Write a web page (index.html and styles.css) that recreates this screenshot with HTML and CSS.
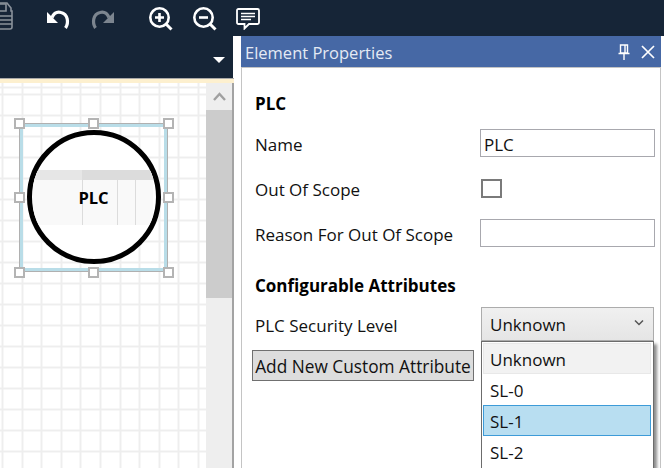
FILE: index.html
```html
<!DOCTYPE html>
<html>
<head>
    <title>Element Properties</title>
    <link rel="stylesheet" href="styles.css">
</head>
<body>
    <div class="toolbar">
        <svg class="tool-save" width="14" height="32" viewBox="0 0 14 32">
            <path d="M-6 3H7L11 8V11H12V27Q12 29 10 29H-6Z" fill="none" stroke="#8a929b" stroke-width="1.600"/>
            <path d="M-4 4H6V11H-4ZM-4 16H12M-4 20H12M-4 24H12" fill="none" stroke="#8a929b" stroke-width="1.600"/>
        </svg>
        <svg class="tool-undo" width="26" height="26" viewBox="0 0 26 26">
            <path d="M20.500 24C24 19 23 10 16 8.500C12 7.500 9 9 7 13.500" fill="none" stroke="#fff" stroke-width="3.200"/>
            <path d="M2 8V19H13Z" fill="#fff"/>
        </svg>
        <svg class="tool-redo" width="26" height="26" viewBox="0 0 26 26">
            <path d="M5.500 24C2 19 3 10 10 8.500C14 7.500 17 9 19 13.500" fill="none" stroke="#7c858f" stroke-width="3.200"/>
            <path d="M24 8V19H13Z" fill="#7c858f"/>
        </svg>
        <svg class="tool-zoom-in" width="26" height="26" viewBox="0 0 26 26">
            <circle cx="11.500" cy="12.500" r="9.200" fill="none" stroke="#fff" stroke-width="2.600"/>
            <path d="M18 19L23.500 24.500" stroke="#fff" stroke-width="3"/>
            <path d="M11.500 8V17M7 12.500H16" stroke="#fff" stroke-width="2.600"/>
        </svg>
        <svg class="tool-zoom-out" width="26" height="26" viewBox="0 0 26 26">
            <circle cx="11.500" cy="12.500" r="9.200" fill="none" stroke="#fff" stroke-width="2.600"/>
            <path d="M18 19L23.500 24.500" stroke="#fff" stroke-width="3"/>
            <path d="M7 12.500H16" stroke="#fff" stroke-width="2.600"/>
        </svg>
        <svg class="tool-comment" width="24" height="22" viewBox="0 0 24 22">
            <path d="M2.500 1H21.500Q23 1 23 2.500V14.500Q23 16 21.500 16H13L8.500 20.500V16H2.500Q1 16 1 14.500V2.500Q1 1 2.500 1Z" fill="none" stroke="#fff" stroke-width="1.800"/>
            <path d="M5 5.500H19M5 8.500H19M5 11.500H15" stroke="#fff" stroke-width="1.500"/>
        </svg>
    </div>

    <div class="main">
        <div class="designer">
            <div class="ribbon"><span class="ribbon-arrow"></span></div>
            <div class="ribbon-edge"></div>
            <div class="canvas-area">
                <div class="canvas">
                    <div class="shape">
                        <div class="shape-frame"></div>
                        <div class="shape-circle">
                            <div class="shape-fill">
                                <div class="fill-head"></div>
                                <div class="fill-rule rule-a"></div>
                                <div class="fill-rule rule-b"></div>
                                <div class="fill-rule rule-c"></div>
                            </div>
                        </div>
                        <div class="shape-label">PLC</div>
                        <span class="handle h-tl"></span>
                        <span class="handle h-tm"></span>
                        <span class="handle h-tr"></span>
                        <span class="handle h-ml"></span>
                        <span class="handle h-mr"></span>
                        <span class="handle h-bl"></span>
                        <span class="handle h-bm"></span>
                        <span class="handle h-br"></span>
                    </div>
                </div>
                <div class="scrollbar">
                    <div class="scroll-up">
                        <svg width="13" height="9" viewBox="0 0 13 9"><path d="M1 8L6.500 2L12 8" fill="none" stroke="#a0a0a0" stroke-width="2.400"/></svg>
                    </div>
                    <div class="scroll-thumb"></div>
                </div>
            </div>
        </div>

        <div class="panel">
            <div class="panel-title">
                <span class="panel-name">Element Properties</span>
                <svg class="pin" width="12" height="16" viewBox="0 0 12 16">
                    <path d="M2.500 1H9.500V9H2.500ZM7 1V9M0.500 9.500H11.500M6 10V16" fill="none" stroke="#fff" stroke-width="1.400"/>
                </svg>
                <svg class="close" width="14" height="14" viewBox="0 0 14 14">
                    <path d="M1 1L13 13M13 1L1 13" stroke="#fff" stroke-width="1.700"/>
                </svg>
            </div>
            <div class="panel-body">
                <div class="heading first">PLC</div>
                <div class="row name-row">
                    <span class="row-label">Name</span>
                    <span class="text-field">PLC</span>
                </div>
                <div class="row scope-row">
                    <span class="row-label">Out Of Scope</span>
                    <span class="checkbox"></span>
                </div>
                <div class="row reason-row">
                    <span class="row-label">Reason For Out Of Scope</span>
                    <span class="text-field"></span>
                </div>
                <div class="heading second">Configurable Attributes</div>
                <div class="row level-row">
                    <span class="row-label">PLC Security Level</span>
                    <span class="combo">
                        Unknown
                        <svg class="combo-arrow" width="10" height="7" viewBox="0 0 10 7"><path d="M1 1.500L5 5.500L9 1.500" fill="none" stroke="#555" stroke-width="1.500"/></svg>
                    </span>
                </div>
                <button class="add-button">Add New Custom Attribute</button>

                <ul class="dropdown">
                    <li class="option current">Unknown</li>
                    <li class="option">SL-0</li>
                    <li class="option selected">SL-1</li>
                    <li class="option">SL-2</li>
                </ul>
            </div>
        </div>
    </div>
</body>
</html>
```

FILE: styles.css
```css
/* Global styles */
html, body {
    margin: 0;
    padding: 0;
    height: 100%;
}

body {
    width: 664px;
    height: 468px;
    overflow: hidden;
    background-color: #fff;
    font-family: 'Open Sans', 'Noto Sans', sans-serif;
    font-size: 17px;
    color: #111;
    display: flex;
    flex-direction: column;
}

/* Top toolbar */
.toolbar {
    height: 36px;
    background-color: #162537;
    display: flex;
    align-items: flex-start;
    flex-shrink: 0;
}

.toolbar svg {
    display: block;
    flex-shrink: 0;
}

.tool-undo {
    margin: 4px 0 0 31px;
}

.tool-redo {
    margin: 4px 0 0 19px;
}

.tool-zoom-in {
    margin: 5px 0 0 32px;
}

.tool-zoom-out {
    margin: 5px 0 0 18px;
}

.tool-comment {
    margin: 8px 0 0 18px;
}

/* Main area */
.main {
    flex: 1;
    display: flex;
    min-height: 0;
}

.designer {
    width: 234px;
    display: flex;
    flex-direction: column;
}

.ribbon {
    height: 42px;
    margin-right: 1px;
    background-color: #162537;
    position: relative;
}

.ribbon-arrow {
    position: absolute;
    left: 213px;
    top: 21px;
    border-left: 6px solid transparent;
    border-right: 6px solid transparent;
    border-top: 6px solid #fff;
}

.ribbon-edge {
    height: 4px;
    background-color: #fdf0cf;
    border-top: 1px solid #a9a9a9;
}

.canvas-area {
    flex: 1;
    display: flex;
    min-height: 0;
    border-right: 2px solid #a3a3a3;
}

/* Canvas grid */
.canvas {
    width: 206px;
    position: relative;
    background-color: #fff;
    background-image:
        repeating-linear-gradient(to right, #eeeeee 0, #eeeeee 2px, transparent 2px, transparent 19.6px),
        repeating-linear-gradient(to bottom, #eeeeee 0, #eeeeee 2px, transparent 2px, transparent 21px);
    background-position: 1.500px 0, 0 10.500px;
}

.scrollbar {
    width: 26px;
    background-color: #eeeeee;
}

.scroll-up {
    height: 27px;
    display: flex;
    justify-content: center;
    align-items: center;
}

.scroll-thumb {
    height: 188px;
    background-color: #cccccc;
}

/* Selected shape */
.shape {
    position: absolute;
    left: 19px;
    top: 40px;
    width: 149px;
    height: 149px;
}

.shape-frame {
    position: absolute;
    inset: 0;
    border: 1px solid #b0b0b0;
    box-shadow: inset 0 0 0 3px #b9dde8;
}

.shape-circle {
    position: absolute;
    left: 8px;
    top: 7px;
    width: 134px;
    height: 134px;
    box-sizing: border-box;
    border: 5px solid #000;
    border-radius: 50%;
    background-color: #fff;
    overflow: hidden;
}

.shape-fill {
    position: absolute;
    left: 1px;
    top: 35px;
    width: 120px;
    height: 55px;
    background-color: #f9f9f9;
}

.fill-head {
    height: 10px;
    background: linear-gradient(to right, #e6e6e6 49px, #dcdcdc 49px);
}

.fill-rule {
    position: absolute;
    top: 0;
    width: 1px;
    height: 55px;
    background-color: #dcdcdc;
}

.rule-a {
    left: 49px;
}

.rule-b {
    left: 84px;
}

.rule-c {
    left: 102px;
}

.shape-label {
    position: absolute;
    left: 0;
    right: 0;
    top: 64px;
    text-align: center;
    font-size: 16.500px;
    font-weight: 700;
    line-height: 22px;
    color: #000;
}

.handle {
    position: absolute;
    width: 7px;
    height: 7px;
    background-color: #fff;
    border: 2px solid #b4b4b4;
}

.h-tl { left: -5px; top: -5px; }
.h-tm { left: 69px; top: -5px; }
.h-tr { left: 144px; top: -5px; }
.h-ml { left: -5px; top: 69px; }
.h-mr { left: 144px; top: 69px; }
.h-bl { left: -5px; top: 144px; }
.h-bm { left: 69px; top: 144px; }
.h-br { left: 144px; top: 144px; }

/* Properties panel */
.panel {
    width: 420px;
    margin-left: 7px;
    display: flex;
    flex-direction: column;
}

.panel-title {
    height: 31px;
    background-color: #4668a5;
    color: #e4eaf4;
    display: flex;
    align-items: center;
    padding: 0 6px 0 4px;
    flex-shrink: 0;
}

.panel-name {
    flex: 1;
    font-size: 16.500px;
    padding-top: 2px;
}

.close {
    margin-left: 11px;
}

.panel-body {
    flex: 1;
    position: relative;
    padding: 0 5px 0 13px;
    border: 1px solid #c4c4c4;
    border-bottom: 0;
}

.heading {
    font-weight: 700;
    color: #000;
    line-height: 24px;
}

.heading.first {
    margin-top: 24px;
}

.heading.second {
    margin-top: 27px;
}

.row {
    display: flex;
    align-items: center;
    justify-content: space-between;
    height: 28px;
}

.row-label {
    padding-top: 3px;
}

.name-row {
    margin-top: 13px;
}

.scope-row {
    margin-top: 17px;
}

.reason-row {
    margin-top: 17px;
}

.level-row {
    margin-top: 9px;
    height: 34px;
}

.text-field {
    width: 175px;
    height: 28px;
    box-sizing: border-box;
    border: 1px solid #a8a8ae;
    padding-left: 3px;
    line-height: 30px;
    background-color: #fff;
}

.checkbox {
    width: 21px;
    height: 19px;
    box-sizing: border-box;
    border: 2px solid #7a7a7a;
    margin-right: 153px;
}

.combo {
    width: 173px;
    height: 34px;
    box-sizing: border-box;
    margin-right: 1px;
    border: 1px solid #acacac;
    background: linear-gradient(#f0f0f0, #e5e5e5);
    padding-left: 8px;
    line-height: 34px;
    position: relative;
}

.combo-arrow {
    position: absolute;
    right: 9px;
    top: 11px;
}

.add-button {
    display: block;
    margin: 9px 0 0 -3px;
    width: 222px;
    height: 31px;
    padding: 1px 0 0;
    box-sizing: border-box;
    border: 1px solid #707070;
    background-color: #dddddd;
    font-family: inherit;
    font-size: 17.300px;
    color: #111;
    text-align: center;
    white-space: nowrap;
}

/* Open combo list */
.dropdown {
    position: absolute;
    left: 239px;
    top: 273px;
    width: 173px;
    height: 127px;
    box-sizing: border-box;
    margin: 0;
    padding: 1px 2px 1px 1px;
    list-style: none;
    background-color: #fff;
    border: 1px solid #6c6c6c;
    border-bottom: 0;
    box-shadow: 3px 3px 3px rgba(0, 0, 0, 0.45);
}

.option {
    height: 31px;
    box-sizing: border-box;
    padding-left: 6px;
    line-height: 31px;
    border: 1px solid transparent;
}

.option.current {
    background-color: #f2f2f2;
    border-color: #e8e8e8;
}

.option.selected {
    background-color: #b8def1;
    border-color: #3d9bd8;
}
```
